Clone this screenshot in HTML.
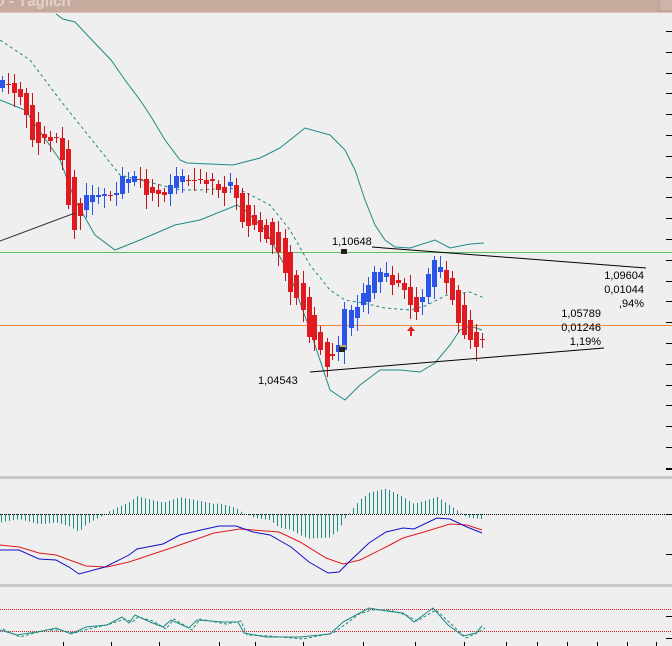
<!DOCTYPE html>
<html><head><meta charset="utf-8"><style>
html,body{margin:0;padding:0;background:#efefef;width:672px;height:646px;overflow:hidden}
svg{display:block}
text{font-family:"Liberation Sans",sans-serif;font-size:11px;fill:#000}
</style></head><body>
<svg id="s" width="672" height="646" viewBox="0 0 672 646" xmlns="http://www.w3.org/2000/svg">
<rect width="672" height="646" fill="#efefef"/>
<rect x="0" y="0" width="672" height="13" fill="#c6aa9e"/>
<rect x="0" y="12" width="672" height="1" fill="#d8c4bb"/>
<text x="-6" y="6" style="font-size:15px;font-weight:bold;fill:#e2d2cb">D - Täglich</text>
<rect x="659" y="-2" width="14" height="13" fill="#cdb3a8" stroke="#b89a8e"/>
<g id="g"></g>
</svg>
<script>
var g=document.getElementById('g'),h='';
function L(x1,y1,x2,y2,c,w,d){h+='<line x1="'+x1+'" y1="'+y1+'" x2="'+x2+'" y2="'+y2+'" stroke="'+c+'" stroke-width="'+(w||1)+'"'+(d?' stroke-dasharray="'+d+'"':'')+'/>';}
function P(pts,c,w,d){h+='<polyline fill="none" points="'+pts.map(function(p){return p.join(',')}).join(' ')+'" stroke="'+c+'" stroke-width="'+(w||1)+'"'+(d?' stroke-dasharray="'+d+'"':'')+'/>';}
for(var y=31;y<475;y+=20.8)L(666,Math.round(y)+.5,672,Math.round(y)+.5,'#000');
[469,514,554,616,638].forEach(function(y){L(666,y+.5,672,y+.5,'#000')});
[63,111,159,219,255,303,363,415,464,506,537,567,597,627,656].forEach(function(x){L(x+.5,642,x+.5,646,'#000')});
h+='<rect x="0" y="476" width="672" height="3" fill="#c8c8c8"/><rect x="0" y="584" width="672" height="3" fill="#c8c8c8"/>';
L(0,252.5,672,252.5,'#5cc060');L(0,325.5,672,325.5,'#f08a3c');
P([[56,14],[63,19],[75,22],[90,38],[111,60],[125,80],[140,100],[150,115],[165,140],[180,160],[187,163],[233,165],[260,158],[280,148],[305,128],[330,135],[345,150],[355,170],[365,200],[375,225],[385,240],[395,247],[410,248],[435,240],[450,248],[470,244],[484,243]],'#1f8a84');
P([[0,100],[25,110],[60,160],[75,200],[95,235],[115,250],[140,240],[175,225],[200,220],[237,205],[245,210],[265,230],[290,275],[310,330],[330,390],[345,400],[360,385],[380,370],[400,370],[420,372],[435,363],[450,345],[460,330],[470,326],[482,330]],'#1f8a84');
P([[0,40],[30,60],[60,100],[100,150],[120,175],[140,180],[160,185],[180,190],[200,190],[230,188],[245,192],[270,205],[290,230],[310,265],[330,290],[345,300],[363,303],[385,308],[410,310],[425,306],[447,295],[470,292],[484,298]],'#1f8a84',1,'3,3');
var C=[[2,88,80],[8,84,85],[14,83,93],[20,89,97],[26,93,115],[32,105,140],[38,122,143],[44,134,138],[50,137,141],[56,137,138],[62,138,160],[68,149,205],[74,177,230],[80,203,216],[86,210,195],[92,202,195],[98,197,195],[104,196,194],[110,195,195],[116,195,193],[122,194,176],[128,183,179],[134,182,176],[140,179,179],[146,179,195],[152,187,193],[158,190,194],[164,192,195],[170,194,185],[176,188,176],[182,182,176],[188,180,181],[194,180,181],[200,179,180],[206,180,184],[212,179,181],[218,184,190],[224,187,193],[230,186,182],[236,185,198],[242,193,222],[248,205,226],[254,215,225],[260,220,232],[266,225,239],[272,222,245],[278,232,252],[285,238,273],[290,252,292],[296,275,298],[303,283,310],[309,297,337],[314,315,340],[320,332,350],[327,342,367],[332,354,356],[338,352,345],[344,350,309],[351,328,310],[357,318,307],[363,305,293],[368,302,285],[374,293,272],[380,282,272],[386,277,273],[392,275,285],[398,280,283],[404,283,290],[410,287,305],[416,297,312],[422,302,297],[428,297,274],[434,287,260],[440,272,267],[446,270,283],[452,278,300],[458,290,323],[464,305,335],[470,320,340],[476,332,347],[482,339,340]];
C.forEach(function(c,i){var x=c[0],o=c[1],cl=c[2],up=cl<o,col=up?'#2a55e8':'#e01a1f',t=Math.min(o,cl),b=Math.max(o,cl);
var hi=t-4-((i*7)%9),lo=b+4+((i*5)%11);
L(x+.5,hi,x+.5,lo,up?'#2a55e8':'#c0141a');
h+='<rect x="'+(x-2)+'" y="'+t+'" width="5" height="'+Math.max(1,b-t)+'" fill="'+col+'"/>';});
L(0,241,75,213,'#333');L(372,247,646,268,'#000');L(310,372,604,348,'#000');
h+='<rect x="341" y="249" width="6" height="5" fill="#222"/><rect x="339" y="347" width="6" height="5" fill="#222"/><rect x="340" y="345" width="6" height="2" fill="#c8b060"/>';
h+='<path d="M411 326 L407 331 L410 331 L410 336 L412 336 L412 331 L415 331 Z" fill="#e01a1f"/>';
h+='<text x="332" y="245">1,10648</text><text x="258" y="384">1,04543</text>';
h+='<text x="644" y="279" text-anchor="end">1,09604</text><text x="644" y="293" text-anchor="end">0,01044</text><text x="644" y="307" text-anchor="end">,94%</text>';
h+='<text x="601" y="317" text-anchor="end">1,05789</text><text x="601" y="331" text-anchor="end">0,01246</text><text x="601" y="345" text-anchor="end">1,19%</text>';
var B=[[0,550],[19,550],[39,559],[56,560],[69,567],[79,574],[105,567],[129,555],[137,549],[163,544],[180,535],[201,530],[219,526],[236,526],[253,532],[270,535],[291,547],[309,562],[328,573],[339,572],[351,560],[369,543],[386,532],[403,528],[414,529],[437,518],[450,519],[467,527],[482,533]];
var R=[[0,545],[19,547],[39,553],[56,555],[86,566],[107,567],[129,562],[171,548],[214,533],[240,529],[279,532],[300,542],[326,558],[343,564],[360,560],[386,547],[403,538],[424,532],[450,524],[467,525],[482,530]];
function I(a,x){for(var i=1;i<a.length;i++)if(x<=a[i][0]){var p=a[i-1],q=a[i];return p[1]+(q[1]-p[1])*(x-p[0])/(q[0]-p[0]);}return a[a.length-1][1];}
L(0,514.5,672,514.5,'#000',1,'1,1');
for(var x=1;x<=484;x+=4){var v=(I(R,x)-I(B,x))*1.7;L(x+.5,514,x+.5,514-v,'#1f8a84');}
P(R,'#e01a1f');P(B,'#1010c8');
L(0,609.5,672,609.5,'#e01a1f',1,'1,1');L(0,631.5,672,631.5,'#e01a1f',1,'1,1');
var S=[[0,630],[17,635],[43,631],[56,628],[71,634],[86,627],[107,625],[122,617],[129,623],[135,615],[150,622],[163,627],[171,620],[189,628],[197,620],[223,622],[238,622],[244,633],[266,637],[300,637],[330,634],[343,622],[356,615],[369,608],[386,611],[403,613],[414,622],[433,608],[448,625],[463,636],[476,633],[482,626]];
P(S,'#1f8a84');
P(S.map(function(p,i){return [p[0]+3,p[1]+(i%2?2:-1)]}),'#1f8a84',1,'3,2');
g.innerHTML=h;
</script>
</body></html>
